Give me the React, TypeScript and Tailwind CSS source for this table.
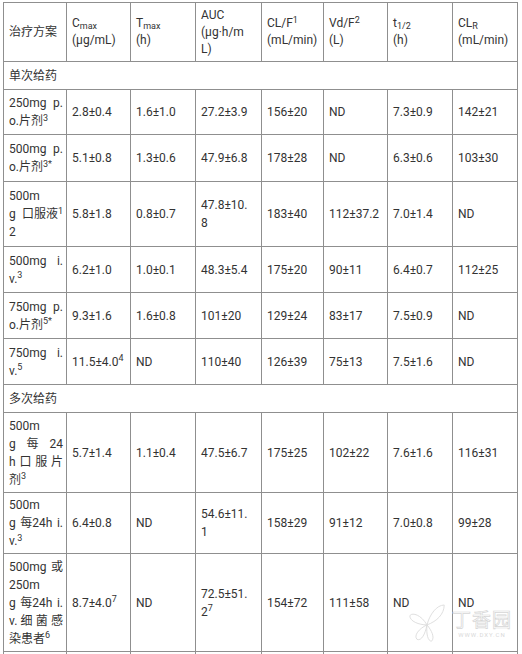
import type { ReactNode } from "react";

// one line whose words are pushed to both edges, like justified text
const Sp = ({ w }: { w: ReactNode[] }) => (
  <span className="flex justify-between">
    {w.map((x, i) => <span key={i}>{x}</span>)}
  </span>
);

const L = ({ children }: { children: ReactNode }) => <span className="block">{children}</span>;

type Row = { h: string; section?: string; cells?: ReactNode[] };

const widths = [63, 64, 65, 66, 62, 64, 65, 65];

const header: ReactNode[] = [
  <L>治疗方案</L>,
  <><L>C<sub>max</sub></L><L>(μg/mL)</L></>,
  <><L>T<sub>max</sub></L><L>(h)</L></>,
  <><L>AUC</L><L>(μg·h/m</L><L>L)</L></>,
  <><L>CL/F<sup>1</sup></L><L>(mL/min)</L></>,
  <><L>Vd/F<sup>2</sup></L><L>(L)</L></>,
  <><L>t<sub>1/2</sub></L><L>(h)</L></>,
  <><L>CL<sub>R</sub></L><L>(mL/min)</L></>,
];

const rows: Row[] = [
  { h: "h-[28px]", section: "单次给药" },
  {
    h: "h-[45px]",
    cells: [
      <><Sp w={["250mg", "p."]} /><L>o.片剂<sup>3</sup></L></>,
      "2.8±0.4", "1.6±1.0", "27.2±3.9", "156±20", "ND", "7.3±0.9", "142±21",
    ],
  },
  {
    h: "h-[47px]",
    cells: [
      <><Sp w={["500mg", "p."]} /><L>o.片剂<sup>3*</sup></L></>,
      "5.1±0.8", "1.3±0.6", "47.9±6.8", "178±28", "ND", "6.3±0.6", "103±30",
    ],
  },
  {
    h: "h-[65px]",
    cells: [
      <><L>500m</L><Sp w={["g", <>口服液<sup>1</sup></>]} /><L>2</L></>,
      "5.8±1.8", "0.8±0.7",
      <><L>47.8±10.</L><L>8</L></>,
      "183±40", "112±37.2", "7.0±1.4", "ND",
    ],
  },
  {
    h: "h-[46px]",
    cells: [
      <><Sp w={["500mg", "i."]} /><L>v.<sup>3</sup></L></>,
      "6.2±1.0", "1.0±0.1", "48.3±5.4", "175±20", "90±11", "6.4±0.7", "112±25",
    ],
  },
  {
    h: "h-[46px]",
    cells: [
      <><Sp w={["750mg", "p."]} /><L>o.片剂<sup>5*</sup></L></>,
      "9.3±1.6", "1.6±0.8", "101±20", "129±24", "83±17", "7.5±0.9", "ND",
    ],
  },
  {
    h: "h-[46px]",
    cells: [
      <><Sp w={["750mg", "i."]} /><L>v.<sup>5</sup></L></>,
      <>11.5±4.0<sup>4</sup></>,
      "ND", "110±40", "126±39", "75±13", "7.5±1.6", "ND",
    ],
  },
  { h: "h-[28px]", section: "多次给药" },
  {
    h: "h-[80px]",
    cells: [
      <><L>500m</L><Sp w={["g", "每", "24"]} /><Sp w={["h", "口", "服", "片"]} /><L>剂<sup>3</sup></L></>,
      "5.7±1.4", "1.1±0.4", "47.5±6.7", "175±25", "102±22", "7.6±1.6", "116±31",
    ],
  },
  {
    h: "h-[61px]",
    cells: [
      <><L>500m</L><Sp w={["g", "每24h", "i."]} /><L>v.<sup>3</sup></L></>,
      "6.4±0.8", "ND",
      <><L>54.6±11.</L><L>1</L></>,
      "158±29", "91±12", "7.0±0.8", "99±28",
    ],
  },
  {
    h: "h-[98px]",
    cells: [
      <><Sp w={["500mg", "或"]} /><L>250m</L><Sp w={["g", "每24h", "i."]} /><Sp w={["v.", "细", "菌", "感"]} /><L>染患者<sup>6</sup></L></>,
      <>8.7±4.0<sup>7</sup></>,
      "ND",
      <><L>72.5±51.</L><L>2<sup>7</sup></L></>,
      "154±72", "111±58", "ND", "ND",
    ],
  },
  { h: "h-[40px]", cells: ["", "", "", "", "", "", "", ""] },
];

const cell = "border border-[#8f8f8f] pl-[5px] pr-[3px] align-middle whitespace-nowrap text-left";

const Watermark = () => (
  <div className="absolute left-[408px] top-[602px] flex items-start gap-[6px] pointer-events-none">
    <svg width="38" height="44" viewBox="0 0 42 46" fill="none" stroke="#dcdcdc" strokeWidth="1">
      <path d="M21 24 C14 12 4 10 2 14 C2 20 12 24 21 24 Z" />
      <path d="M21 24 C12 28 6 36 10 40 C15 42 19 34 21 24 Z" />
      <path d="M21 24 C24 12 32 2 40 2 C40 12 32 20 21 24 Z" />
      <path d="M21 24 C26 30 30 38 26 42 C22 42 20 34 21 24 Z" />
    </svg>
    <div className="flex flex-col items-center pt-[9px]">
      <span className="text-[19px] leading-[20px] text-white [-webkit-text-stroke:0.7px_#d6d6d6] tracking-[1px]">丁香园</span>
      <span className="text-[6px] leading-[8px] text-[#d9d9d9] tracking-[1px]">WWW.DXY.CN</span>
    </div>
  </div>
);

export default function App() {
  return (
    <div className="relative w-[522px] h-[654px] overflow-hidden bg-white pl-[3px] pt-[2px] font-['Roboto','Noto_Sans_CJK_SC',sans-serif] text-[12px] leading-[18px] text-[#333]">
      <table className="table-fixed border-collapse w-[514px]">
        <colgroup>
          {widths.map((w, i) => <col key={i} style={{ width: w }} />)}
        </colgroup>
        <thead>
          <tr className="h-[59px] leading-[17px]">
            {header.map((c, i) => <th key={i} className={`${cell} font-normal`}>{c}</th>)}
          </tr>
        </thead>
        <tbody>
          {rows.map((r, i) =>
            r.section ? (
              <tr key={i} className={r.h}>
                <td colSpan={8} className={cell}>{r.section}</td>
              </tr>
            ) : (
              <tr key={i} className={r.h}>
                {r.cells!.map((c, j) => <td key={j} className={cell}>{c}</td>)}
              </tr>
            )
          )}
        </tbody>
      </table>
      <Watermark />
    </div>
  );
}
